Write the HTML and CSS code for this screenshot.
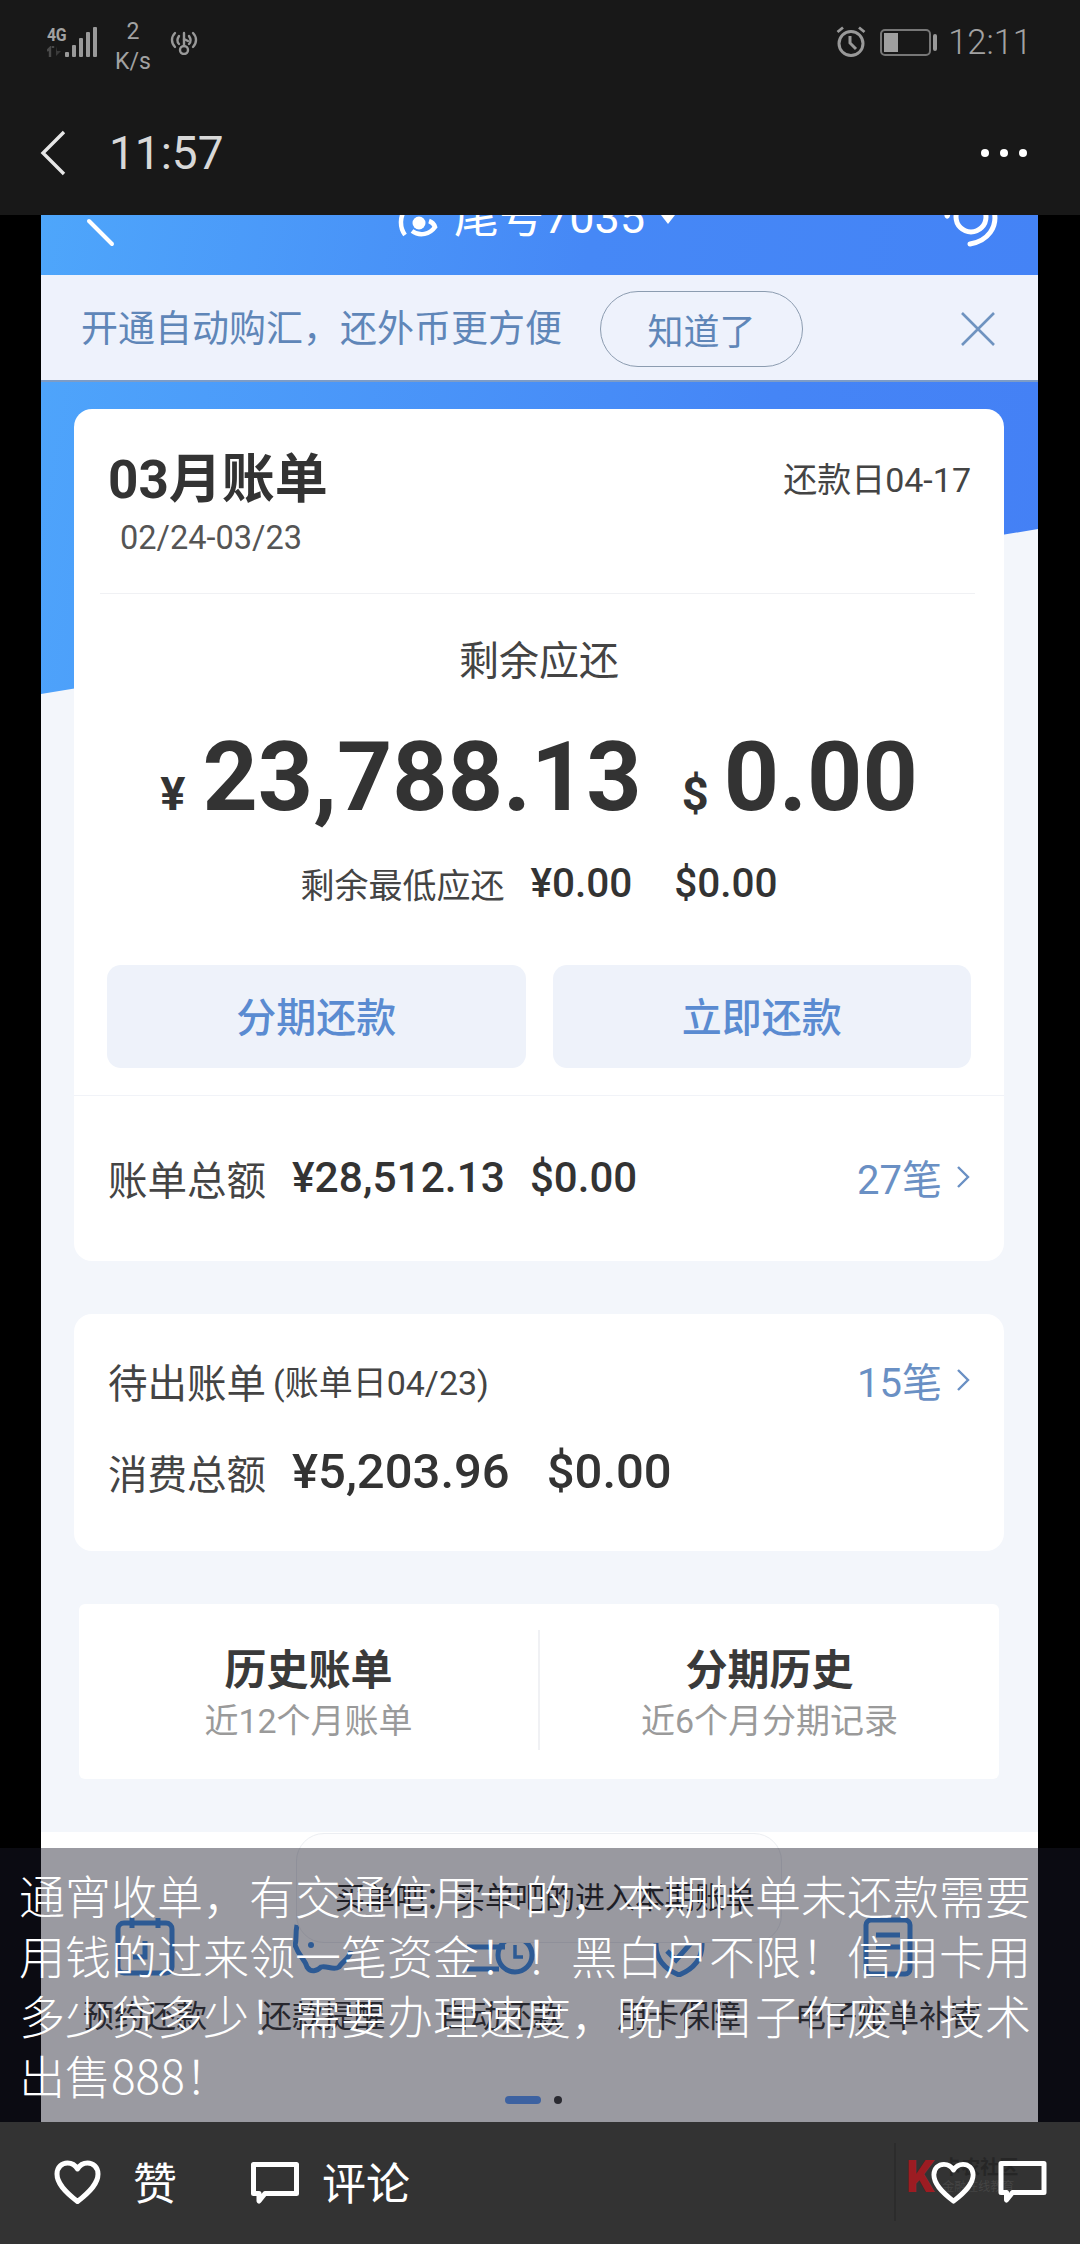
FILE: index.html
```html
<!DOCTYPE html>
<html lang="zh-CN">
<head>
<meta charset="utf-8">
<title>动态详情</title>
<link rel="stylesheet" href="styles.css">
</head>
<body>
<div class="page">
  <header class="top">
    <div class="status">
      <div class="net">
        <div class="net-type">
          <span class="net-4g">4G</span>
          <svg class="net-arrows" viewBox="0 0 18 11" width="18" height="11"><path d="M3 11V2L0 5M6 0V2" fill="none" stroke="#4a4a4a" stroke-width="2.4"/><path d="M9 0V10L14 5H10" fill="#3a3a3a"/></svg>
        </div>
        <svg class="bars" viewBox="0 0 32 30" width="32" height="30"><g fill="#999"><rect x="0" y="25" width="4" height="5" rx="1"/><rect x="7" y="18" width="4" height="12" rx="1"/><rect x="14" y="11" width="4" height="19" rx="1"/><rect x="21" y="5" width="4" height="25" rx="1"/><rect x="28" y="0" width="4" height="30" rx="1"/></g></svg>
      </div>
      <div class="speed"><span>2</span><span>K/s</span></div>
      <svg class="hotspot" viewBox="0 0 28 24" width="28" height="24" fill="none" stroke="#999" stroke-width="2.4" stroke-linecap="round"><path d="M5 2C1 6 1 12 5 16M23 2C27 6 27 12 23 16M9 5C7 8 7 11 9 13M19 5C21 8 21 11 19 13"/><path d="M14 2V15"/><circle cx="14" cy="19" r="4"/><path d="M14 8L18 10"/></svg>
      <div class="status-gap"></div>
      <svg class="alarm" viewBox="0 0 30 31" width="30" height="31" fill="none" stroke="#999"><circle cx="15" cy="17.5" r="12" stroke-width="3"/><path d="M14 10V17L20 23" stroke-width="3"/><path d="M1.500 6L7 1.500M28.500 6L23 1.500" stroke-width="2.800"/></svg>
      <div class="battery"><div class="battery-body"><div class="battery-fill"></div></div><div class="battery-nub"></div></div>
      <span class="clock">12:11</span>
    </div>
    <nav class="nav">
      <svg class="nav-back" viewBox="0 0 26 46" width="26" height="46" fill="none" stroke="#e6e6e6" stroke-width="3.400"><path d="M24 2L3 23L24 44"/></svg>
      <span class="nav-title">11:57</span>
      <div class="dots"><i></i><i></i><i></i></div>
    </nav>
  </header>

  <main class="stage">
    <div class="shot">
      <div class="wash"></div>
      <div class="apphead">
        <svg class="app-back" viewBox="0 0 30 40" width="30" height="40" fill="none" stroke="#fff" stroke-width="4" stroke-linecap="round"><path d="M27 37L4 14"/></svg>
        <div class="app-title">
          <svg class="card-mark" viewBox="0 0 42 42" width="42" height="42" fill="none" stroke="#fff" stroke-width="4.500"><path d="M7 38C1 30 2 18 8 12"/><path d="M14 34C22 40 32 37 37 30C36 27 34 25 31 24"/><circle cx="21" cy="26" r="6.500" fill="#fff" stroke="none"/></svg>
          <span>尾号7035</span>
          <i class="caret"></i>
        </div>
        <svg class="app-help" viewBox="0 0 54 48" width="54" height="48" fill="none" stroke="#fff"><circle cx="27" cy="18" r="15" stroke-width="5"/><path d="M4 14C3 22 2 12 4 10" stroke-width="5"/><path d="M50 12C54 28 44 42 26 45" stroke-width="5" stroke-linecap="round"/></svg>
      </div>
      <div class="banner">
        <span class="banner-text">开通自动购汇，还外币更方便</span>
        <span class="banner-pill">知道了</span>
        <svg class="banner-close" viewBox="0 0 36 36" width="36" height="36" fill="none" stroke="#6f93c0" stroke-width="2.600"><path d="M2 2L34 34M34 2L2 34"/></svg>
      </div>

      <div class="content">
        <section class="card bill">
          <div class="bill-head">
            <h1 class="bill-title">03月账单</h1>
            <span class="bill-due">还款日04-17</span>
          </div>
          <div class="bill-range">02/24-03/23</div>
          <div class="rule-soft"></div>
          <div class="remain-label">剩余应还</div>
          <div class="remain">
            <span class="cur cur-yen">¥</span><span class="amount">23,788.13</span>
            <span class="cur cur-usd">$</span><span class="amount">0.00</span>
          </div>
          <div class="minimum">
            <span>剩余最低应还</span><b class="min-a">¥0.00</b><b class="min-b">$0.00</b>
          </div>
          <div class="actions">
            <button class="action">分期还款</button>
            <button class="action">立即还款</button>
          </div>
          <div class="rule-full"></div>
          <div class="row row-total">
            <span class="row-label">账单总额</span>
            <b class="sum-a">¥28,512.13</b>
            <b class="sum-b">$0.00</b>
            <span class="more">27笔<svg class="more-arrow" viewBox="0 0 16 28" width="16" height="28" fill="none" stroke="#6a90c4" stroke-width="2.400"><path d="M3 4L13 14L3 24"/></svg></span>
          </div>
        </section>

        <section class="card pending">
          <div class="row">
            <span class="row-label">待出账单</span>
            <span class="row-note">(账单日04/23)</span>
            <span class="more">15笔<svg class="more-arrow" viewBox="0 0 16 28" width="16" height="28" fill="none" stroke="#6a90c4" stroke-width="2.400"><path d="M3 4L13 14L3 24"/></svg></span>
          </div>
          <div class="row row-spend">
            <span class="row-label">消费总额</span>
            <b class="spend-a">¥5,203.96</b>
            <b class="spend-b">$0.00</b>
          </div>
        </section>

        <section class="card history">
          <div class="history-col">
            <strong>历史账单</strong>
            <span>近12个月账单</span>
          </div>
          <div class="history-col history-col-split">
            <strong>分期历史</strong>
            <span>近6个月分期记录</span>
          </div>
        </section>
      </div>

      <section class="sheet">
        <div class="popup">买单吧：买单吧的进入本期账单</div>
        <div class="tools">
          <div class="tool">
            <svg viewBox="0 0 60 60" width="60" height="60" fill="none" stroke="#3d8ee8" stroke-width="5"><rect x="3" y="6" width="54" height="50" rx="6"/><path d="M17 1V11M43 1V11M30 24V40H18"/></svg>
            <span>预约还款</span>
          </div>
          <div class="tool">
            <svg viewBox="0 0 60 60" width="60" height="60" fill="none" stroke="#3d8ee8" stroke-width="5"><path d="M4 8C2 18 4 22 2 28C6 40 12 42 14 50C18 56 24 54 28 50C34 48 40 54 46 50C50 44 56 42 58 34"/><circle cx="18" cy="28" r="3" fill="#3d8ee8" stroke="none"/></svg>
            <span>还款提醒</span>
          </div>
          <div class="tool">
            <svg viewBox="0 0 72 60" width="72" height="60" fill="none" stroke="#3d8ee8" stroke-width="5"><path d="M2 30H40M2 52H34"/><circle cx="50" cy="38" r="17"/><path d="M50 28V40H58" stroke-width="3.500"/></svg>
            <span>自动还款</span>
          </div>
          <div class="tool">
            <svg viewBox="0 0 60 60" width="60" height="60" fill="none" stroke="#3d8ee8" stroke-width="5"><path d="M7 6H53V28C53 44 42 53 30 58C18 53 7 44 7 28Z"/><path d="M18 34L27 43L42 26"/></svg>
            <span>用卡保障</span>
          </div>
          <div class="tool">
            <svg viewBox="0 0 60 60" width="60" height="60" fill="none" stroke="#3d8ee8" stroke-width="5"><rect x="8" y="3" width="44" height="54" rx="5"/><path d="M18 18H42M18 30H42"/></svg>
            <span>电子账单补寄</span>
          </div>
        </div>
        <div class="pager"><i class="pager-on"></i><i class="pager-off"></i></div>
      </section>
    </div>

    <div class="caption">通宵收单，有交通信用卡的，本期帐单未还款需要<br>用钱的过来领一笔资金！！黑白户不限！信用卡用<br>多少贷多少！需要办理速度，晚了日子作废！技术<br>出售888！</div>
  </main>

  <footer class="foot">
    <div class="foot-action foot-like">
      <svg viewBox="0 0 47 45" width="47" height="45" fill="none" stroke="#fff" stroke-width="5"><path d="M23.500 41.500C10 31 3 23 3 14C3 7 8 3 13.500 3C18 3 21.500 5.500 23.500 9C25.500 5.500 29 3 33.500 3C39 3 44 7 44 14C44 23 37 31 23.500 41.500Z" stroke-linejoin="round"/></svg>
      <span>赞</span>
    </div>
    <div class="foot-action foot-comment">
      <svg viewBox="0 0 48 43" width="48" height="43"><path d="M2.500 2.500H45.500V31.500H14L8 39V31.500H2.500Z" fill="none" stroke="#fff" stroke-width="5" stroke-linejoin="round"/></svg>
      <span>评论</span>
    </div>
    <div class="mark">
      <span class="mark-k">K</span>
      <span class="mark-text"><b>卡农社区</b><small>金融在线教育</small></span>
    </div>
    <div class="foot-right">
      <svg viewBox="0 0 47 45" width="45" height="44" fill="none" stroke="#fff" stroke-width="5"><path d="M23.500 41.500C10 31 3 23 3 14C3 7 8 3 13.500 3C18 3 21.500 5.500 23.500 9C25.500 5.500 29 3 33.500 3C39 3 44 7 44 14C44 23 37 31 23.500 41.500Z" stroke-linejoin="round"/></svg>
      <svg viewBox="0 0 48 43" width="49" height="43"><path d="M2.500 2.500H45.500V31.500H14L8 39V31.500H2.500Z" fill="none" stroke="#fff" stroke-width="5" stroke-linejoin="round"/></svg>
    </div>
  </footer>
</div>
</body>
</html>
```
FILE: styles.css
```css
* { box-sizing: border-box; }
html, body { margin: 0; padding: 0; background: #000; }
body { font-family: Roboto, "Noto Sans CJK SC", sans-serif; }

.page { width: 1080px; height: 2244px; display: flex; flex-direction: column; overflow: hidden; background: #000; }

/* system + nav bars */
.top { height: 215px; background: #181818; flex: none; }
.status { height: 90px; display: flex; align-items: flex-start; padding: 20px 48px 0 47px; color: #a2a2a2; }
.net { display: flex; align-items: flex-end; margin-top: 7px; }
.net-type { width: 18px; display: flex; flex-direction: column; }
.net-4g { font-size: 18px; line-height: 16px; height: 19px; font-weight: 700; letter-spacing: -0.5px; transform: scaleX(.88); transform-origin: left; }
.net-arrows { display: block; }
.speed { display: flex; flex-direction: column; align-items: center; width: 34px; margin-left: 19px; font-size: 23px; line-height: 30px; margin-top: -3px; }
.hotspot { margin: 11px 0 0 20px; }
.status-gap { flex: 1; }
.alarm { margin-top: 6px; }
.battery { display: flex; align-items: center; margin: 9px 0 0 14px; height: 27px; }
.battery-body { width: 51px; height: 27px; border: 2px solid #777; border-radius: 5px; padding: 2px; }
.battery-fill { width: 14px; height: 100%; background: #a0a0a0; }
.battery-nub { width: 4px; height: 17px; margin-left: 2px; background: #999; border-radius: 2px; }
.clock { font-size: 34.500px; line-height: 44px; margin-left: 11px; font-weight: 300; }
.nav { height: 125px; display: flex; align-items: center; padding: 0 53px 0 40px; }
.nav-back { flex: none; }
.nav-title { font-size: 46px; line-height: 60px; color: #d8d8d8; margin-left: 43px; flex: 1; }
.dots { display: flex; gap: 11px; }
.dots i { width: 8px; height: 8px; border-radius: 50%; background: #fff; }

/* photographed app */
.stage { flex: 1; min-height: 0; position: relative; padding: 0 42px 0 41px; background: #000; }
.shot { height: 100%; position: relative; overflow: hidden; background: #f3f6fb; display: flex; flex-direction: column; }
.wash { position: absolute; left: 0; right: 0; top: 166px; height: 313px; background: linear-gradient(100deg, #4ea4fb 0%, #4585f6 70%, #4480f5 100%); clip-path: polygon(0 0, 100% 0, 100% 148px, 0 100%); }
.apphead { height: 60px; flex: none; position: relative; display: flex; align-items: flex-end; justify-content: space-between; overflow: hidden; padding: 0 40px 32px 44px; background: linear-gradient(100deg, #4ea6fb 0%, #4688f6 55%, #4483f6 100%); }
.app-back { flex: none; margin-bottom: -4px; }
.app-title { display: flex; align-items: center; color: #fff; font-size: 45px; line-height: 50px; flex: none; margin-left: 14px; }
.card-mark { margin: 0 14px 0 0; }
.caret { width: 0; height: 0; margin: 0 0 19px 16px; align-self: flex-end; border-left: 7px solid transparent; border-right: 7px solid transparent; border-top: 9px solid #fff; }
.app-help { flex: none; margin-bottom: -4px; }
.banner { height: 107px; flex: none; position: relative; display: flex; align-items: center; padding: 0 42px 0 40px; background: #eef2fc; border-bottom: 2px solid #7d9cc6; color: #5f86b8; }
.banner-text { font-size: 37px; line-height: 50px; margin-top: 5px; }
.banner-pill { width: 203px; height: 76px; margin: 2px 0 0 38px; border: 1.5px solid #8c9cb0; border-radius: 38px; font-size: 36px; display: flex; align-items: center; justify-content: center; }
.banner-close { margin: 2px 0 0 auto; }

.content { position: relative; padding: 27px 34px 0 33px; flex: none; }
.card { background: #fff; border-radius: 18px; }
.bill { height: 852px; }
.bill-head { display: flex; justify-content: space-between; padding: 41px 33px 0 34px; }
.bill-title { margin: 0; font-size: 53px; line-height: 60px; font-weight: 700; color: #333; }
.bill-due { font-size: 34px; line-height: 60px; color: #444; }
.bill-range { font-size: 32.500px; line-height: 40px; color: #555; margin: 8px 0 0 46px; }
.rule-soft { height: 1px; margin: 35px 29px 0 26px; background: #f0f1f4; }
.remain-label { font-size: 40px; line-height: 50px; color: #444; text-align: center; margin-top: 43px; }
.remain { display: flex; align-items: baseline; justify-content: center; height: 110px; margin-top: 35px; color: #333; }
.amount { font-size: 96.500px; line-height: 110px; font-weight: 700; }
.cur { font-size: 47px; font-weight: 700; }
.cur-yen { margin-right: 17px; }
.cur-usd { margin: 0 15px 0 40px; }
.minimum { display: flex; justify-content: center; align-items: center; height: 44px; margin-top: 29px; font-size: 34px; color: #444; }
.minimum b { font-size: 40.500px; font-weight: 500; color: #333; }
.min-a { margin-left: 26px; }
.min-b { margin-left: 42px; }
.actions { display: flex; gap: 27px; padding: 0 33px; margin-top: 60px; }
.action { flex: 1; height: 103px; border: 0; border-radius: 14px; background: #eef2fa; color: #5a8bd1; font-family: inherit; font-size: 40px; font-weight: 500; padding: 0 0 4px; }
.rule-full { height: 1px; margin-top: 27px; background: #f1f3f8; }
.row { display: flex; align-items: center; height: 50px; padding: 0 33px 0 34px; color: #444; }
.row-total { margin-top: 56px; }
.row-label { font-size: 39.500px; }
.row-note { font-size: 34px; margin-left: 7px; }
.row b { color: #333; font-weight: 500; }
.sum-a { font-size: 42.500px; margin-left: 26px; }
.sum-b { font-size: 42px; margin-left: 25px; }
.more { margin-left: auto; display: flex; align-items: center; color: #6a90c4; font-size: 40px; }
.more-arrow { margin-left: 13px; }
.pending { margin-top: 53px; height: 237px; padding-top: 41px; }
.row-spend { margin-top: 41px; }
.spend-a { font-size: 49px; margin-left: 26px; }
.spend-b { font-size: 49px; margin-left: 37px; }
.history { margin: 53px 5px 0; height: 175px; display: flex; padding: 26px 0 29px; border-radius: 6px; }
.history-col { flex: 1; display: flex; flex-direction: column; align-items: center; padding-top: 16px; }
.history-col-split { border-left: 2px solid #f0f1f4; }
.history-col strong { font-size: 42px; line-height: 50px; font-weight: 700; color: #3a3a3a; }
.history-col span { font-size: 34px; line-height: 40px; margin-top: 5px; color: #9a9a9a; }

.sheet { position: relative; flex: 1; margin-top: 53px; background: #fff; }
.popup { position: absolute; z-index: 1; left: 255px; top: 1px; width: 486px; height: 110px; padding: 40px 0 0 38px; background: #fdfdfe; border: 1px solid #eceef2; border-radius: 28px; font-size: 30px; line-height: 48px; color: #222; }
.tools { display: flex; gap: 54px; padding: 85px 0 0 42px; }
.tool { display: flex; flex-direction: column; align-items: center; color: #333; font-size: 31px; }
.tool svg { display: block; }
.tool span { line-height: 40px; margin-top: 20px; white-space: nowrap; }
.pager { display: flex; align-items: center; gap: 13px; margin: 59px 0 0 464px; }
.pager-on { width: 36px; height: 8px; border-radius: 4px; background: #5a9cff; }
.pager-off { width: 8px; height: 8px; border-radius: 50%; background: #383838; }

.caption { position: absolute; z-index: 2; left: 0; right: 0; bottom: 0; height: 274px; padding: 16px 0 0 19px; background: rgba(25, 25, 40, .44); color: #fff; font-size: 46px; line-height: 60px; font-weight: 300; white-space: nowrap; font-family: "Noto Sans CJK SC", sans-serif; }

/* bottom bar */
.foot { height: 122px; flex: none; background: #333; position: relative; display: flex; align-items: flex-start; padding-top: 38px; color: #fff; }
.foot-action { display: flex; align-items: flex-start; font-size: 44px; line-height: 50px; }
.foot-like { margin-left: 54px; }
.foot-like span { margin-left: 32px; }
.foot-comment { margin-left: 74px; padding-top: 2px; }
.foot-comment span { margin-left: 23px; margin-top: -2px; }
.mark { position: absolute; left: 894px; top: 21px; width: 140px; height: 78px; border-left: 2px solid #2c2c2c; display: flex; padding: 14px 0 0 10px; }
.mark-k { font-size: 44px; line-height: 40px; font-weight: 900; color: #9c1c22; }
.mark-text { display: flex; flex-direction: column; margin-left: 8px; color: #262626; }
.mark-text b { font-size: 19px; line-height: 22px; white-space: nowrap; }
.mark-text small { font-size: 12px; line-height: 16px; white-space: nowrap; color: #454545; }
.foot-right { position: absolute; left: 931px; top: 39px; display: flex; gap: 22px; }
```
